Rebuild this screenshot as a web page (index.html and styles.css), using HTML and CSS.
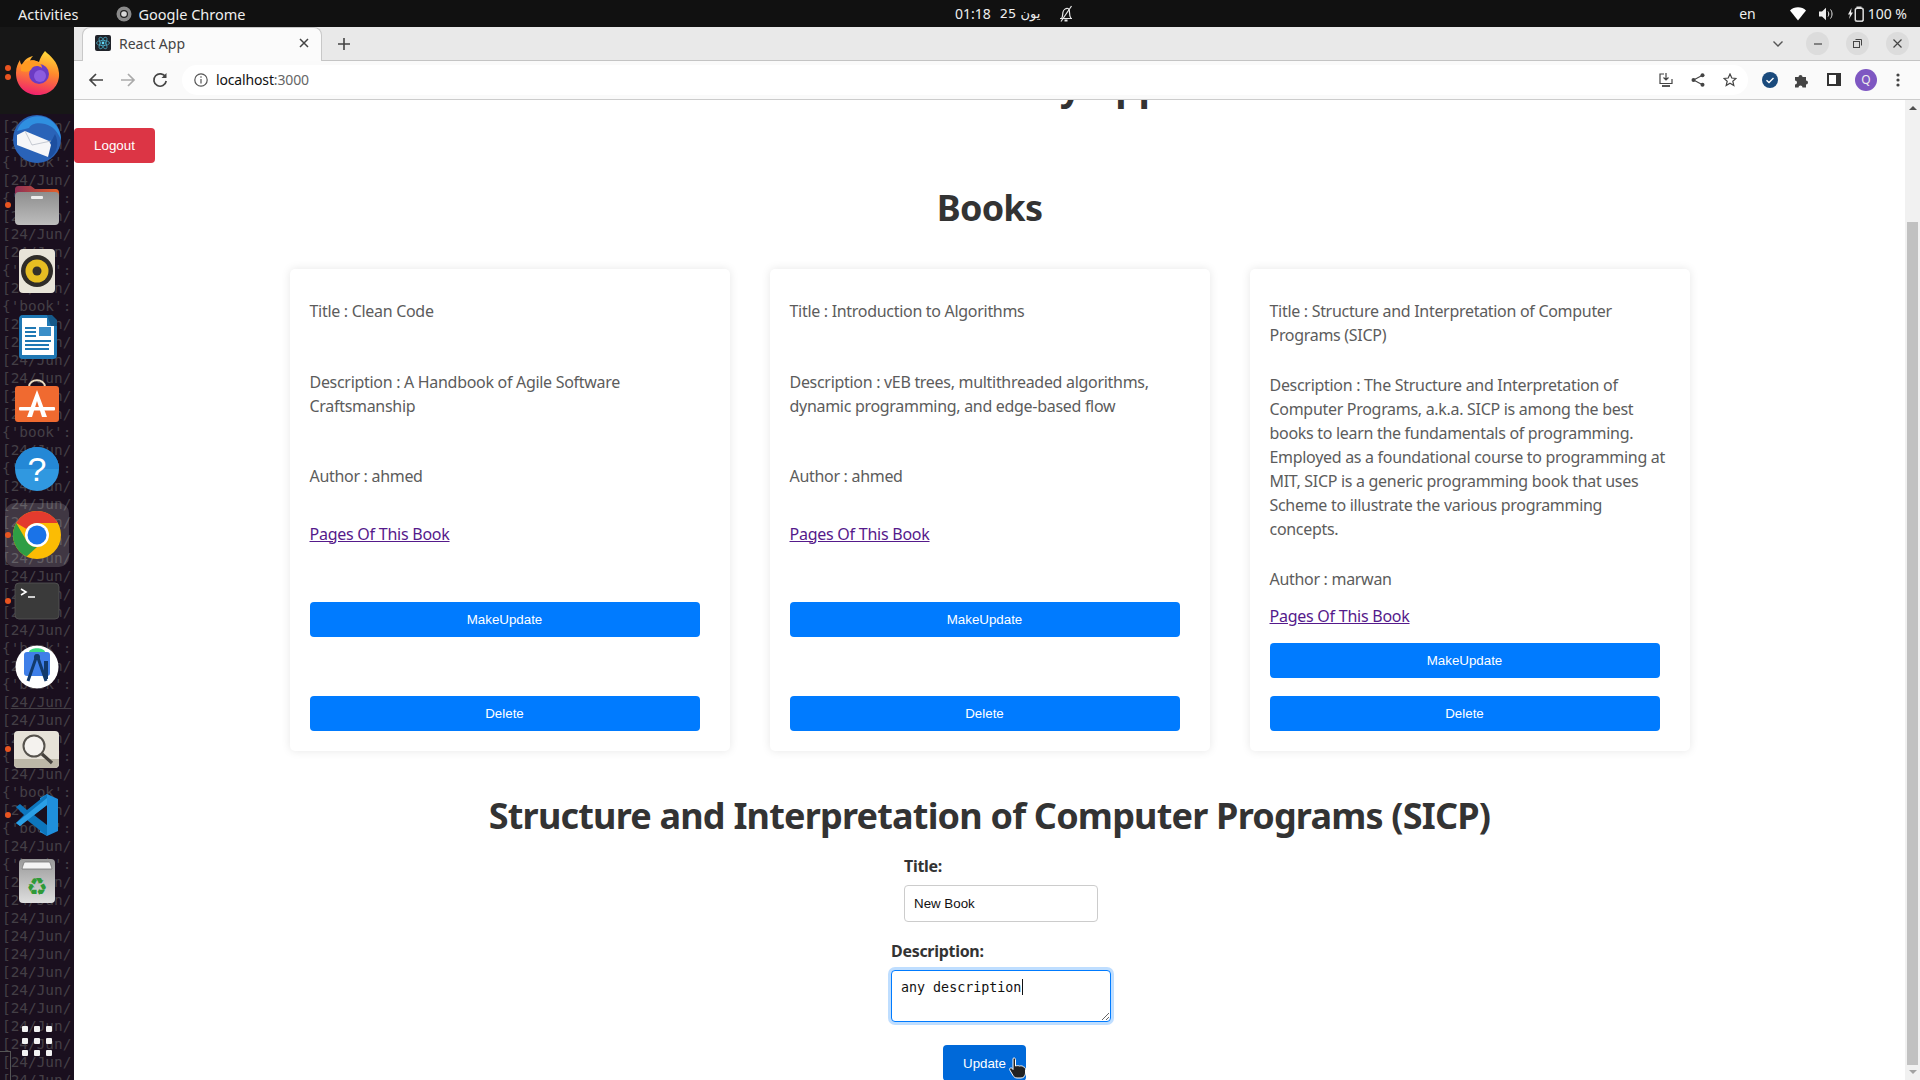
FILE: index.html
```html
<!DOCTYPE html>
<html>

<head>
    <meta charset="UTF-8">
    <title>React App</title>
    <link rel="stylesheet" href="styles.css">
</head>

<body>
    <header class="topbar">
        <div class="topbar-left">
            <span class="activities">Activities</span>
            <svg class="topbar-chrome" width="16" height="16" viewBox="0 0 16 16">
                <circle cx="8" cy="8" r="7.5" fill="#8a8a8a" />
                <circle cx="8" cy="8" r="4" fill="#222" />
                <circle cx="8" cy="8" r="2.8" fill="#d8d8d8" />
            </svg>
            <span>Google Chrome</span>
        </div>
        <div class="topbar-clock">
            <span>01:18</span>
            <span class="clock-date">25 يون</span>
            <svg class="clock-bell" width="16" height="18" viewBox="0 0 16 18" fill="none" stroke="#e8e8e8" stroke-width="1.2">
                <path d="M2 13.5h12M3.5 13.5c1.5-2 1-4 1.5-6.5S8 3 10 3.500c1.500.4 1.500 2 1.500 4s.5 4.500 1.500 6" />
                <path d="M13.500 1 3 16.500" />
                <path d="M6.500 15.500h3" stroke-width="2" />
            </svg>
        </div>
        <div class="topbar-right">
            <span class="lang">en</span>
            <svg width="16" height="14" viewBox="0 0 16 14"><path d="M0 3.500C4-.7 12-.7 16 3.500L8 13.500z" fill="#fff" /></svg>
            <svg class="status-volume" width="15" height="14" viewBox="0 0 15 14" fill="none">
                <path d="M0 4.500h3L7 .8v12.400L3 9.500H0z" fill="#eee" />
                <path d="M9 4.500c1 1.500 1 3.500 0 5M11.500 2.500c2 2.500 2 6.500 0 9" stroke="#eee" />
            </svg>
            <svg class="status-battery" width="16" height="16" viewBox="0 0 16 16" fill="none">
                <path d="M3.500 2 0 8.500h2L1 13l4-6.500H3z" fill="#eee" />
                <rect x="7" y="2" width="8.500" height="13.500" rx="1.500" fill="#fff" stroke="#ccc" />
                <rect x="8.500" y=".5" width="5" height="1.500" fill="#ddd" />
                <rect x="8" y="3" width="6.500" height="11.500" rx="1" fill="#111" />
            </svg>
            <span class="battery-text">100 %</span>
        </div>
    </header>

    <div class="workspace">
        <nav class="dock">
            <div class="dock-window"></div>
            <pre class="dock-term">[24/Jun/
[24/Jun/
{'book':
[24/Jun/
{'book':
[24/Jun/
[24/Jun/
[24/Jun/
{'book':
[24/Jun/
{'book':
[24/Jun/
[24/Jun/
[24/Jun/
[24/Jun/
[24/Jun/
[24/Jun/
{'book':
[24/Jun/
{'book':
[24/Jun/
[24/Jun/
[24/Jun/
[24/Jun/
[24/Jun/
[24/Jun/
[24/Jun/
[24/Jun/
[24/Jun/
{'book':
[24/Jun/
{'book':
[<u>24/Jun/</u>
[24/Jun/
[24/Jun/
{'book':
[24/Jun/
{'book':
[24/Jun/
{'book':
[24/Jun/
{'book':
[24/Jun/
[24/Jun/
[24/Jun/
[24/Jun/
[24/Jun/
[24/Jun/
[24/Jun/
[24/Jun/
[24/Jun/
[24/Jun/
[24/Jun/
[24/Jun/</pre>
            <div class="dock-box"></div>

            <div class="dock-list">
                <!-- firefox -->
                <div class="dock-item">
                    <span class="run-dot run-dot-a"></span><span class="run-dot run-dot-b"></span>
                    <svg width="64" height="64" viewBox="0 0 64 64">
                        <defs>
                            <linearGradient id="fx" x1="0.6" y1="0" x2="0.4" y2="1">
                                <stop offset="0" stop-color="#ffd93a" />
                                <stop offset=".45" stop-color="#ff8a2c" />
                                <stop offset="1" stop-color="#f0206e" />
                            </linearGradient>
                        </defs>
                        <path d="M40 10c5 5 13 10 14 22 1 13-9 22-21 22S11 46 11 32c0-6 2-10 4-13 0 3 1 4 2 5 2-5 6-8 11-9-2 2-3 4-3 5 3-1 7 0 9 1 1-4 3-7 6-11z" fill="url(#fx)" />
                        <circle cx="34" cy="33" r="10" fill="#6b3bc4" />
                        <circle cx="35" cy="35" r="6" fill="#8c5ce0" />
                        <path d="M16 24c5-5 12-6 17-3 3 2 4 4 4 6-4-3-8-2-10 0-1 3-5 5-11 3z" fill="#ff9a22" />
                    </svg>
                </div>
                <!-- thunderbird -->
                <div class="dock-item">
                    <svg width="64" height="64" viewBox="0 0 64 64">
                        <circle cx="32" cy="32" r="24" fill="#2a63b8" />
                        <path d="M12 24C16 12 30 6 42 11c8 4 14 12 14 22-3-8-8-14-16-16-8-2-14 0-16 4z" fill="#2f8fe0" />
                        <path d="M50 27c4 8 3 18-5 24l-5-4z" fill="#1d4fa0" />
                        <path d="M12 28 20 24l24 10 2 4-3 12-31-12z" fill="#f6f6f8" />
                        <path d="M20 24l7 14 19-4" fill="none" stroke="#b8bcc6" stroke-width=".8" />
                    </svg>
                </div>
                <!-- files -->
                <div class="dock-item">
                    <span class="run-dot"></span>
                    <svg width="64" height="64" viewBox="0 0 64 64">
                        <defs>
                            <linearGradient id="folderback" x1="0" y1="0" x2="1" y2="0">
                                <stop offset="0" stop-color="#8e2f55" />
                                <stop offset="1" stop-color="#e4602a" />
                            </linearGradient>
                            <linearGradient id="folderfront" x1="0" y1="0" x2="0" y2="1">
                                <stop offset="0" stop-color="#8e8e8e" />
                                <stop offset="1" stop-color="#bdbdbd" />
                            </linearGradient>
                        </defs>
                        <path d="M10 17c0-3 1-4 4-4h12l4 3h20c3 0 4 1 4 4v12H10z" fill="url(#folderback)" />
                        <rect x="10" y="19" width="44" height="33" rx="4" fill="url(#folderfront)" />
                        <rect x="26" y="23" width="12" height="3" rx="1" fill="#eee" />
                    </svg>
                </div>
                <!-- rhythmbox -->
                <div class="dock-item">
                    <svg width="64" height="64" viewBox="0 0 64 64">
                        <rect x="14" y="10" width="36" height="44" rx="4" fill="#e8e4d8" />
                        <circle cx="32" cy="32" r="16" fill="#2f2c28" />
                        <circle cx="32" cy="32" r="11.500" fill="#e6bd22" />
                        <circle cx="32" cy="32" r="4.500" fill="#33302a" />
                    </svg>
                </div>
                <!-- writer -->
                <div class="dock-item">
                    <svg width="64" height="64" viewBox="0 0 64 64">
                        <path d="M14 14c0-2 1-4 4-4h26l8 8v32c0 3-2 4-4 4H18c-3 0-4-1-4-4z" fill="#1f78b4" />
                        <path d="M17 13h25v8h7v29H17z" fill="#fff" />
                        <path d="M42 10h5l5 5v6h-6z" fill="#15598a" />
                        <rect x="34" y="22" width="12" height="9" fill="#3a8ec8" />
                        <path d="M20 23h11M20 27h11M20 31h11M20 36h26M20 40h24M20 44h24" stroke="#1f78b4" stroke-width="1.800" />
                    </svg>
                </div>
                <!-- software -->
                <div class="dock-item">
                    <svg width="64" height="64" viewBox="0 0 64 64">
                        <path d="M24 16c0-9 16-9 16 0" fill="none" stroke="#e9dcc0" stroke-width="2" />
                        <rect x="10" y="15" width="44" height="36" rx="3" fill="#f06a30" />
                        <path d="M32 19 22 46h5l5-16 5 16h5z" fill="#fff" />
                        <rect x="14" y="36" width="36" height="3.500" rx="1" fill="#fff" />
                    </svg>
                </div>
                <!-- help -->
                <div class="dock-item">
                    <svg width="64" height="64" viewBox="0 0 64 64">
                        <circle cx="32" cy="32" r="22" fill="#3098e0" />
                        <path d="M10 32a22 22 0 0 1 44 0z" fill="#2488d6" />
                        <text x="32" y="44" class="help-mark">?</text>
                    </svg>
                </div>
                <!-- chrome -->
                <div class="dock-item dock-item-active">
                    <span class="run-dot"></span>
                    <svg width="64" height="64" viewBox="0 0 64 64">
                        <circle cx="32" cy="32" r="24" fill="#fbbc04" />
                        <path d="M11.200 20A24 24 0 0 1 52.800 20H32a12 12 0 0 0-10.400 6z" fill="#e33b2e" />
                        <path d="M11.200 20 21.600 38A12 12 0 0 0 32 44L21.600 53.600A24 24 0 0 1 11.200 20z" fill="#2f9e44" />
                        <circle cx="32" cy="32" r="12" fill="#fff" />
                        <circle cx="32" cy="32" r="9.500" fill="#1a73e8" />
                    </svg>
                </div>
                <!-- terminal -->
                <div class="dock-item">
                    <span class="run-dot"></span>
                    <svg width="64" height="64" viewBox="0 0 64 64">
                        <rect x="10" y="14" width="44" height="36" rx="4" fill="#3a3a3a" stroke="#555" stroke-width=".8" />
                        <path d="M16 20l5 3-5 3M23 28h7" fill="none" stroke="#fff" stroke-width="1.600" />
                    </svg>
                </div>
                <!-- android studio -->
                <div class="dock-item dock-item-last">
                    <svg width="64" height="64" viewBox="0 0 64 64">
                        <circle cx="32" cy="32" r="21.500" fill="#fff" />
                        <rect x="19" y="17" width="26" height="24" rx="3" fill="#3f7fe8" />
                        <path d="M24 17c1-5 15-5 16 0z" fill="#3ddc84" />
                        <path d="M32 20 23 46M32 20l9 26" stroke="#123a6b" stroke-width="3" fill="none" />
                        <circle cx="32" cy="22" r="3" fill="#123a6b" />
                        <rect x="39" y="26" width="4" height="18" fill="#123a6b" />
                    </svg>
                </div>
                <!-- magnifier -->
                <div class="dock-item">
                    <span class="run-dot"></span>
                    <svg width="64" height="64" viewBox="0 0 64 64">
                        <rect x="9" y="14" width="45" height="37" rx="4" fill="#e6e2d8" />
                        <path d="M9 42h45v5c0 2-2 4-4 4H13c-2 0-4-2-4-4z" fill="#bdb8a8" />
                        <circle cx="29" cy="29" r="10.500" fill="#f4f2ee" stroke="#55524c" stroke-width="2" />
                        <path d="M37 37l10 9" stroke="#44413c" stroke-width="3.200" />
                    </svg>
                </div>
                <!-- vs code -->
                <div class="dock-item">
                    <span class="run-dot"></span>
                    <svg width="64" height="64" viewBox="0 0 64 64">
                        <path d="M42 11 53 16v32l-11 5-7-4V15z" fill="#1f8fdc" />
                        <path d="M42 11v42L22 37l-7 6-4-3 8-8-8-8 4-3 7 6z" fill="#0d76bd" />
                        <path d="M42 22 29 32l13 10z" fill="#1a1020" />
                        <path d="M15 43 42 22v-7L11 40z" fill="#2a9fe6" />
                    </svg>
                </div>
                <!-- trash -->
                <div class="dock-item">
                    <svg width="64" height="64" viewBox="0 0 64 64">
                        <defs>
                            <linearGradient id="bin" x1="0" y1="0" x2="0" y2="1">
                                <stop offset="0" stop-color="#9a9a9a" />
                                <stop offset="1" stop-color="#dedede" />
                            </linearGradient>
                        </defs>
                        <rect x="14" y="10" width="36" height="44" rx="4" fill="url(#bin)" />
                        <path d="M17 20c1-4 2-7 3-7h24c1 0 2 3 3 7z" fill="#f4f4f4" stroke="#777" stroke-width=".8" />
                        <text x="32" y="46" class="recycle-mark">♻</text>
                    </svg>
                </div>
            </div>
            <div class="apps-grid">
                <i></i><i></i><i></i><i></i><i></i><i></i><i></i><i></i><i></i>
            </div>
        </nav>

        <div class="browser">
            <div class="tabstrip">
                <div class="tab">
                    <svg class="favicon" width="16" height="16" viewBox="0 0 16 16" fill="none" stroke="#4fb3cf" stroke-width=".7">
                        <rect width="16" height="16" rx="2" fill="#20232a" stroke="none" />
                        <circle cx="8" cy="8" r="1.400" fill="#61dafb" stroke="none" />
                        <ellipse cx="8" cy="8" rx="6.500" ry="2.600" />
                        <ellipse cx="8" cy="8" rx="6.500" ry="2.600" transform="rotate(60 8 8)" />
                        <ellipse cx="8" cy="8" rx="6.500" ry="2.600" transform="rotate(120 8 8)" />
                    </svg>
                    <span class="tab-title">React App</span>
                    <svg class="tab-close" width="10" height="10" viewBox="0 0 10 10"><path d="M1 1l8 8M9 1 1 9" stroke="#444" stroke-width="1.500" /></svg>
                </div>
                <svg class="tab-new" width="12" height="12" viewBox="0 0 12 12"><path d="M6 0v12M0 6h12" stroke="#444" stroke-width="1.600" /></svg>
                <svg class="tab-list" width="10" height="6" viewBox="0 0 10 6" fill="none"><path d="M.5.5 5 5 9.500.5" stroke="#555" stroke-width="1.400" /></svg>
                <span class="win-btn"><svg width="8" height="2" viewBox="0 0 8 2"><path d="M0 1h8" stroke="#444" stroke-width="1.200" /></svg></span>
                <span class="win-btn"><svg width="9" height="9" viewBox="0 0 9 9" fill="none" stroke="#444"><rect x=".5" y="2.500" width="6" height="6" /><path d="M2.500 .5h6v6" /></svg></span>
                <span class="win-btn"><svg width="9" height="9" viewBox="0 0 9 9"><path d="M.5.5l8 8M8.500.5l-8 8" stroke="#444" stroke-width="1.200" /></svg></span>
            </div>

            <div class="toolbar">
                <svg class="nav-icon" width="16" height="16" viewBox="0 0 16 16" fill="none" stroke="#444" stroke-width="1.700"><path d="M15 8H2M8 2 2 8l6 6" /></svg>
                <svg class="nav-icon" width="16" height="16" viewBox="0 0 16 16" fill="none" stroke="#aaa" stroke-width="1.700"><path d="M1 8h13M8 2l6 6-6 6" /></svg>
                <svg class="nav-icon nav-icon-last" width="16" height="16" viewBox="0 0 16 16" fill="none" stroke="#444" stroke-width="1.700"><path d="M13.500 5A6.200 6.200 0 1 0 14.200 9" /><path d="M14.500 1v5h-5z" fill="#444" stroke="none" /></svg>
                <div class="omnibox">
                    <svg width="14" height="14" viewBox="0 0 14 14" fill="none" stroke="#555" stroke-width="1.200"><circle cx="7" cy="7" r="6.200" /><path d="M7 6v4.500M7 3.200v1.600" /></svg>
                    <span class="url">localhost<span class="url-port">:3000</span></span>
                    <svg class="omni-install" width="14" height="14" viewBox="0 0 14 14" fill="none" stroke="#444" stroke-width="1.200"><path d="M5 1H1v9.500h12V6M7 0v6.500M4.500 4.500 7 7l2.500-2.500" /><path d="M3 13h8" stroke-width="1.800" /></svg>
                    <svg class="omni-share" width="14" height="14" viewBox="0 0 14 14" fill="#444"><circle cx="11.500" cy="2.200" r="2" /><circle cx="2.500" cy="7" r="2" /><circle cx="11.500" cy="11.800" r="2" /><path d="M11.500 2.200 2.500 7l9 4.800" fill="none" stroke="#444" stroke-width="1.100" /></svg>
                    <svg class="omni-star" width="14" height="14" viewBox="0 0 14 14" fill="none" stroke="#444" stroke-width="1.200"><path d="M7 1l1.800 4 4.200.4-3.200 2.800 1 4.300L7 10.200l-3.800 2.300 1-4.300L1 5.400 5.200 5z" /></svg>
                </div>
                <div class="toolbar-actions">
                    <svg width="16" height="16" viewBox="0 0 16 16"><circle cx="8" cy="8" r="8" fill="#1a4a7c" /><path d="M4.500 8.200 7 10.500l4.500-4.500" fill="none" stroke="#fff" stroke-width="1.400" /></svg>
                    <svg width="16" height="16" viewBox="0 0 16 16" fill="#444"><path d="M1 5h3.500a2 2 0 1 1 4 0H12v3.500a2 2 0 1 1 0 4V15.500H8.500a2 2 0 1 0-4 0H1v-3a2 2 0 1 0 0-4z" /></svg>
                    <svg width="14" height="13" viewBox="0 0 14 13"><rect x="1" y="1" width="12" height="11" fill="#fff" stroke="#333" stroke-width="2" /><rect x="9" y="1" width="4" height="11" fill="#333" /></svg>
                    <span class="avatar">Q</span>
                    <svg width="4" height="14" viewBox="0 0 4 14" fill="#444"><circle cx="2" cy="2" r="1.600" /><circle cx="2" cy="7" r="1.600" /><circle cx="2" cy="12" r="1.600" /></svg>
                </div>
            </div>

            <div class="viewport">
                <main class="page">
                    <h1 class="app-title">Book Store My App</h1>
                    <button class="btn-logout">Logout</button>
                    <h2 class="section-title">Books</h2>

                    <section class="book-grid">
                        <article class="book-card">
                            <p class="book-row">Title : Clean Code</p>
                            <p class="book-row">Description : A Handbook of Agile Software Craftsmanship</p>
                            <p class="book-row book-author">Author : ahmed</p>
                            <a class="book-link" href="#pages">Pages Of This Book</a>
                            <div class="book-action"><button class="btn-book">MakeUpdate</button></div>
                            <button class="btn-book">Delete</button>
                        </article>
                        <article class="book-card">
                            <p class="book-row">Title : Introduction to Algorithms</p>
                            <p class="book-row">Description : vEB trees, multithreaded algorithms, dynamic programming, and edge-based flow</p>
                            <p class="book-row book-author">Author : ahmed</p>
                            <a class="book-link" href="#pages">Pages Of This Book</a>
                            <div class="book-action"><button class="btn-book">MakeUpdate</button></div>
                            <button class="btn-book">Delete</button>
                        </article>
                        <article class="book-card">
                            <p class="book-row">Title : Structure and Interpretation of Computer Programs (SICP)</p>
                            <p class="book-row">Description : The Structure and Interpretation of Computer Programs, a.k.a. SICP is among the best books to learn the fundamentals of programming. Employed as a foundational course to programming at MIT, SICP is a generic programming book that uses Scheme to illustrate the various programming concepts.</p>
                            <p class="book-row book-author">Author : marwan</p>
                            <a class="book-link" href="#pages">Pages Of This Book</a>
                            <div class="book-action"><button class="btn-book">MakeUpdate</button></div>
                            <button class="btn-book">Delete</button>
                        </article>
                    </section>

                    <h2 class="section-title edit-title">Structure and Interpretation of Computer Programs (SICP)</h2>

                    <form class="edit-form">
                        <div class="field">
                            <label class="field-label">Title:</label>
                            <input class="field-input" type="text" value="New Book">
                        </div>
                        <div class="field">
                            <label class="field-label">Description:</label>
                            <div class="area-wrap">
                                <textarea class="field-area">any description</textarea>
                                <span class="caret"></span>
                            </div>
                        </div>
                        <div class="update-wrap">
                            <button class="btn-update" type="button">Update</button>
                            <svg class="hand" width="18" height="22" viewBox="0 0 18 22">
                                <path d="M4 1.500c1-1 2.500-.5 2.500 1V9c1.500-.5 3-.5 4 0 1.500-.3 3-.2 4 .8 1 .3 2 1 2 2.500V16c0 3-2 5-4.500 5H8c-2 0-3-1-4-2.500L.8 13c-.8-1.500 1-3 2.500-1.500L4 12.500z" fill="#222" stroke="#fff" stroke-width="1" />
                            </svg>
                        </div>
                    </form>
                </main>
                <div class="scrollbar">
                    <span class="scroll-up"></span>
                    <div class="scroll-thumb"></div>
                    <span class="scroll-down"></span>
                </div>
            </div>
        </div>
    </div>
</body>

</html>
```

FILE: styles.css
```css
* {
    box-sizing: border-box;
}

html,
body {
    margin: 0;
    width: 1920px;
    height: 1080px;
    overflow: hidden;
}

body {
    display: flex;
    flex-direction: column;
    font-family: "Noto Sans", "DejaVu Sans", sans-serif;
    background: #fff;
}

/* ubuntu top bar */
.topbar {
    height: 27px;
    flex: none;
    display: grid;
    grid-template-columns: 955px auto 1fr;
    align-items: center;
    background: #111;
    color: #eee;
    font-size: 14.5px;
}

.topbar-left {
    display: flex;
    align-items: center;
    padding-left: 18px;
}

.activities {
    margin-right: 38px;
}

.topbar-chrome {
    margin-right: 6px;
}

.topbar-clock {
    display: flex;
    align-items: center;
    font-size: 14px;
}

.clock-date {
    margin-left: 9px;
    direction: ltr;
    font-family: "DejaVu Sans", sans-serif;
    font-size: 13px;
}

.clock-bell {
    margin-left: 18px;
}

.topbar-right {
    display: flex;
    align-items: center;
    justify-content: flex-end;
    padding-right: 13px;
    font-size: 14px;
}

.lang {
    margin-right: 34px;
}

.status-volume {
    margin-left: 13px;
}

.status-battery {
    margin-left: 14px;
}

.battery-text {
    margin-left: 4px;
}

.workspace {
    flex: 1;
    display: flex;
    min-height: 0;
}

/* dock */
.dock {
    position: relative;
    width: 74px;
    flex: none;
    background: #1a0f1e;
    overflow: hidden;
}

.dock-window {
    position: absolute;
    top: 0;
    left: 0;
    right: 0;
    height: 87px;
    background: #171717;
}

.dock-term {
    position: absolute;
    top: 90px;
    left: 2px;
    margin: 0;
    font-family: "DejaVu Sans Mono", monospace;
    font-size: 14.400px;
    line-height: 18px;
    color: #443f46;
}

.dock-box {
    position: absolute;
    left: 0;
    bottom: 0;
    width: 11px;
    height: 29px;
    border: 1px solid #555;
    border-left: 0;
    border-bottom: 0;
}

.dock-list {
    position: relative;
    padding-top: 13px;
    display: flex;
    flex-direction: column;
    align-items: center;
}

.dock-item {
    position: relative;
    width: 64px;
    height: 66px;
    display: flex;
    align-items: center;
    justify-content: center;
}

.dock-item svg {
    display: block;
}

.dock-item-active::before {
    content: "";
    position: absolute;
    inset: 1px 0;
    border-radius: 10px;
    background: rgba(255, 255, 255, 0.17);
}

.dock-item-active svg {
    position: relative;
}

.dock-item-last {
    margin-bottom: 16px;
}

.run-dot {
    position: absolute;
    top: 30px;
    left: 0;
    width: 6px;
    height: 6px;
    border-radius: 50%;
    background: #e95420;
    z-index: 1;
}

.run-dot-a {
    top: 25px;
}

.run-dot-b {
    top: 34px;
}

.help-mark {
    font-family: "Liberation Sans", sans-serif;
    font-size: 34px;
    fill: #fff;
    text-anchor: middle;
}

.recycle-mark {
    font-family: "DejaVu Sans", sans-serif;
    font-size: 24px;
    fill: #2f9a38;
    text-anchor: middle;
}

.apps-grid {
    position: absolute;
    left: 22px;
    bottom: 24px;
    display: grid;
    grid-template-columns: repeat(3, 6px);
    gap: 6px;
}

.apps-grid i {
    height: 6px;
    border-radius: 1px;
    background: #f2f2f2;
}

/* chrome frame */
.browser {
    flex: 1;
    display: flex;
    flex-direction: column;
    min-width: 0;
}

.tabstrip {
    height: 34px;
    flex: none;
    display: flex;
    align-items: center;
    background: #e9e9e9;
    border-bottom: 1px solid #c4c4c4;
    padding-left: 8px;
    padding-right: 11px;
}

.tab {
    width: 240px;
    height: 34px;
    display: flex;
    align-items: center;
    padding: 0 12px 2px;
    background: #fbfbfb;
    border-radius: 8px 8px 0 0;
    border: 1px solid #c8c8c8;
    border-bottom: 0;
    font-size: 14px;
    color: #444;
}

.favicon {
    flex: none;
}

.tab-title {
    margin-left: 8px;
}

.tab-close {
    margin-left: auto;
}

.tab-new {
    margin-left: 16px;
}

.tab-list {
    margin-left: auto;
    margin-right: 23px;
}

.win-btn {
    width: 23px;
    height: 23px;
    margin-left: 17px;
    display: flex;
    align-items: center;
    justify-content: center;
    border-radius: 50%;
    background: #dcdcdc;
}

.win-btn:nth-of-type(1) {
    margin-left: 0;
}

.toolbar {
    height: 39px;
    flex: none;
    display: flex;
    align-items: center;
    padding-left: 14px;
    padding-bottom: 1px;
    background: #fafafa;
    border-bottom: 1px solid #ccc;
}

.nav-icon {
    margin-right: 16px;
    flex: none;
}

.nav-icon-last {
    margin-right: 14px;
}

.omnibox {
    width: 1566px;
    height: 30px;
    flex: none;
    display: flex;
    align-items: center;
    padding-left: 12px;
    border-radius: 15px;
    background: #fff;
    font-size: 14px;
}

.url {
    margin-left: 8px;
    color: #111;
    letter-spacing: -0.15px;
}

.url-port {
    color: #666;
}

.omni-install {
    margin-left: auto;
}

.omni-share {
    margin-left: 18px;
}

.omni-star {
    margin-left: 18px;
    margin-right: 11px;
}

.toolbar-actions {
    display: grid;
    grid-template-columns: repeat(5, 32px);
    align-items: center;
    justify-items: center;
    padding-left: 6px;
}

.avatar {
    width: 22px;
    height: 22px;
    border-radius: 50%;
    background: #7e57c2;
    color: #eee;
    font-size: 12px;
    display: flex;
    align-items: center;
    justify-content: center;
}

.viewport {
    flex: 1;
    display: flex;
    min-height: 0;
}

/* the page, scrolled down a bit */
.page {
    flex: 1;
    min-width: 0;
    overflow: hidden;
    background: #fff;
    color: #333;
}

.app-title {
    margin: -43px 0 0;
    text-align: center;
    font-size: 38px;
    line-height: 56px;
    letter-spacing: -0.8px;
    color: #333;
}

.btn-logout {
    display: block;
    width: 81px;
    height: 35px;
    margin: 15px 0 0;
    border: 0;
    border-radius: 4px;
    background: #dc3545;
    color: #fff;
    font-family: "Liberation Sans", sans-serif;
    font-size: 13.333px;
}

.section-title {
    margin: 22px 0 0;
    text-align: center;
    font-size: 36px;
    line-height: 46px;
    font-weight: 700;
    letter-spacing: -0.8px;
    color: #333;
}

.book-grid {
    display: grid;
    grid-template-columns: repeat(3, 440px);
    gap: 40px;
    justify-content: center;
    margin-top: 38px;
}

.book-card {
    display: flex;
    flex-direction: column;
    padding: 30px 20px 20px;
    border-radius: 5px;
    background: #fff;
    box-shadow: 0 0 10px rgba(0, 0, 0, 0.1);
    font-size: 16px;
    line-height: 24px;
    color: #5c5c5c;
}

.book-row {
    margin: 0 0 26px;
    flex-grow: 1;
    letter-spacing: -0.3px;
}

.book-author {
    margin-bottom: 13px;
}

.book-link {
    margin-bottom: 15px;
    flex-grow: 2;
    color: #551a8b;
    letter-spacing: -0.25px;
}

.book-action {
    margin-bottom: 18px;
    flex-grow: 2;
}

.btn-book {
    display: block;
    width: 390px;
    height: 35px;
    flex: none;
    border: 0;
    border-radius: 4px;
    background: #007bff;
    color: #fff;
    font-family: "Liberation Sans", sans-serif;
    font-size: 13.333px;
}

.edit-title {
    margin-top: 42px;
}

.edit-form {
    display: flex;
    flex-direction: column;
    align-items: center;
    margin: 15px 0 0 23px;
}

.field {
    display: flex;
    flex-direction: column;
    align-items: flex-start;
    margin-bottom: 17px;
    font-size: 16px;
    line-height: 24px;
}

.field-label {
    font-weight: 700;
    margin-bottom: 7px;
    letter-spacing: -0.3px;
    color: #333;
}

.field-input {
    width: 194px;
    height: 37px;
    padding: 0 9px;
    border: 1px solid #ccc;
    border-radius: 4px;
    font-family: "Liberation Sans", sans-serif;
    font-size: 13.333px;
    color: #111;
}

.area-wrap {
    position: relative;
    display: flex;
}

.field-area {
    width: 220px;
    height: 52px;
    padding: 9px;
    border: 1px solid #007bff;
    border-radius: 4px;
    box-shadow: 0 0 0 3px rgba(0, 123, 255, 0.25);
    outline: 0;
    font-family: "DejaVu Sans Mono", monospace;
    font-size: 13.333px;
    line-height: 16px;
    color: #111;
}

.caret {
    position: absolute;
    left: 131px;
    top: 9px;
    width: 1px;
    height: 16px;
    background: #111;
}

.update-wrap {
    position: relative;
    margin-right: 33px;
    margin-top: 6px;
}

.btn-update {
    display: block;
    width: 83px;
    height: 36px;
    border: 0;
    border-radius: 4px;
    background: #0069d9;
    color: #fff;
    font-family: "Liberation Sans", sans-serif;
    font-size: 13.333px;
}

.hand {
    position: absolute;
    left: 66px;
    top: 12px;
}

/* scrollbar */
.scrollbar {
    width: 15px;
    flex: none;
    position: relative;
    background: #f1f1f1;
}

.scroll-thumb {
    position: absolute;
    top: 122px;
    left: 2px;
    right: 2px;
    height: 843px;
    background: #c1c1c1;
}

.scroll-up,
.scroll-down {
    position: absolute;
    left: 4px;
    width: 0;
    height: 0;
    border-left: 4px solid transparent;
    border-right: 4px solid transparent;
}

.scroll-up {
    top: 6px;
    border-bottom: 4px solid #505050;
}

.scroll-down {
    bottom: 6px;
    border-top: 4px solid #a3a3a3;
}
```
